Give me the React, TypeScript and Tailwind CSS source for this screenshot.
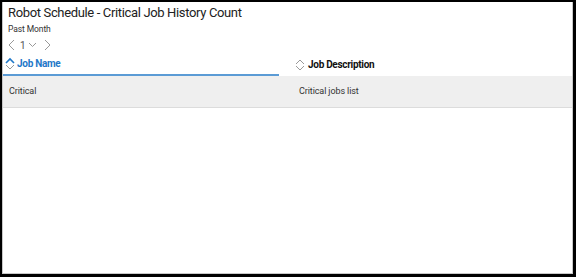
const SortIcon = ({ active }: { active: boolean }) => (
  <svg width="10" height="14" viewBox="0 0 10 14" className="shrink-0">
    <path
      d="M1 6 L5 2 L9 6"
      fill="none"
      stroke={active ? "#1f78c8" : "#9a9a9a"}
      strokeWidth={active ? 1.6 : 1}
    />
    <path d="M1 8 L5 12 L9 8" fill="none" stroke="#9a9a9a" strokeWidth="1" />
  </svg>
);

const Pager = () => (
  <div className="flex items-center h-[14px] text-[#777] text-[10px] gap-[4px]">
    <svg width="7" height="12" viewBox="0 0 7 12">
      <path d="M6 1 L1 6 L6 11" fill="none" stroke="#999" strokeWidth="1" />
    </svg>
    <span className="ml-[1px] text-[#555]">1</span>
    <svg width="9" height="6" viewBox="0 0 9 6" className="-ml-[2px]">
      <path d="M1 1 L4.5 4.5 L8 1" fill="none" stroke="#999" strokeWidth="1" />
    </svg>
    <svg width="7" height="12" viewBox="0 0 7 12" className="ml-[3px]">
      <path d="M1 1 L6 6 L1 11" fill="none" stroke="#999" strokeWidth="1" />
    </svg>
  </div>
);

export default function App() {
  return (
    <div className="w-[576px] h-[277px] bg-black pt-[2px] pl-[2px] pr-[3px] pb-[3px] font-['Roboto',sans-serif]">
      <div className="w-full h-full bg-white border-l border-r border-b border-[#c8c8c8] flex flex-col">
        <div className="pl-[5px] pt-[3px]">
          <div className="text-[13px] leading-[16px] text-[#222] tracking-[-0.35px]">
            Robot Schedule - Critical Job History Count
          </div>
          <div className="text-[8.5px] leading-[12px] text-[#333] mt-[2px] tracking-[-0.1px]">
            Past Month
          </div>
          <div className="mt-[3px]">
            <Pager />
          </div>
        </div>

        <div className="flex mt-[3px] h-[21px] items-end">
          <div className="w-[276px] h-full flex items-center gap-[2px] pl-[2px] pb-[2px] border-b-2 border-[#5b9bd5]">
            <SortIcon active />
            <span className="text-[10px] font-bold text-[#1f78c8] tracking-[-0.3px]">
              Job Name
            </span>
          </div>
          <div className="flex-1 h-full flex items-center gap-[3px] pl-[16px] pb-[2px]">
            <SortIcon active={false} />
            <span className="text-[10px] font-bold text-[#111] tracking-[-0.3px]">
              Job Description
            </span>
          </div>
        </div>

        <div className="flex h-[32px] items-center bg-[#efefef] border-b border-[#dcdcdc] text-[9px] text-[#333] tracking-[-0.1px]">
          <div className="w-[290px] pl-[6px]">Critical</div>
          <div className="flex-1 pl-[6px]">Critical jobs list</div>
        </div>
      </div>
    </div>
  );
}
